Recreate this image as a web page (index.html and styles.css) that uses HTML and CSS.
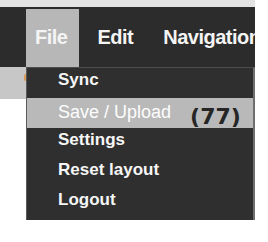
FILE: index.html
```html
<!doctype html>
<html lang="en">
	<head>
		<meta charset="UTF-8" />
		<meta name="viewport" content="width=device-width, initial-scale=1.0" />
		<title>File menu</title>
		<link rel="stylesheet" href="styles.css">
	</head>
	<body>
		<div class="screen">
			<div class="top-strip"></div>
			<nav class="menubar">
				<div class="menu open">File
					<ul class="dropdown">
						<li>Sync</li>
						<li class="active">Save / Upload <span class="note">(77)</span></li>
						<li>Settings</li>
						<li>Reset layout</li>
						<li>Logout</li>
					</ul>
				</div>
				<div class="menu">Edit</div>
				<div class="menu">Navigation</div>
			</nav>
			<div class="content">
				<div class="side-stub"><span class="marker"></span></div>
			</div>
		</div>
	</body>
</html>
```

FILE: styles.css
```css
body {
	margin: 0;
	background: #fff;
	font-family: 'Liberation Sans', Arial, sans-serif;
}
.screen {
	width: 255px;
	height: 242px;
	overflow: hidden;
}
.top-strip {
	height: 7px;
	background: #e3e3e3;
}
.menubar {
	display: flex;
	gap: 9px;
	height: 60px;
	padding-left: 26px;
	background: #2c2c2c;
	white-space: nowrap;
}
.menu {
	position: relative;
	margin-top: 2px;
	padding: 0 12px 0 9px;
	line-height: 56px;
	font-size: 20px;
	font-weight: bold;
	letter-spacing: -0.5px;
	color: #f4f4f4;
}
.menu.open {
	background: #b7b7b7;
}
.dropdown {
	position: absolute;
	top: 100%;
	left: 0;
	z-index: 2;
	box-sizing: border-box;
	width: 229px;
	margin: 0;
	padding: 0 0 2px;
	list-style: none;
	background: #2f2f2f;
	border-top: 1px solid #4c4c4c;
	border-left: 1px solid #5a5a5a;
	border-right: 2px solid #6e6e6e;
	letter-spacing: 0;
}
.dropdown li {
	height: 30px;
	box-sizing: border-box;
	padding: 0 0 6px 31px;
	line-height: 24px;
	font-size: 17px;
	font-weight: bold;
	color: #f6f6f6;
}
.dropdown li.active {
	padding-bottom: 0;
	line-height: 28px;
	background: #b9b9b9;
	font-size: 18px;
	font-weight: normal;
	color: #fdfdfd;
}
.note {
	margin-left: 14px;
	vertical-align: -6px;
	font-family: 'DejaVu Sans', sans-serif;
	font-size: 22px;
	font-weight: bold;
	color: #262626;
}
.side-stub {
	width: 27px;
	height: 32px;
	background: #c7c7c7;
	display: flex;
	justify-content: flex-end;
	padding-top: 7px;
	box-sizing: border-box;
}
.marker {
	width: 3px;
	height: 7px;
	border-radius: 2px;
	background: #d99a5c;
}
```
